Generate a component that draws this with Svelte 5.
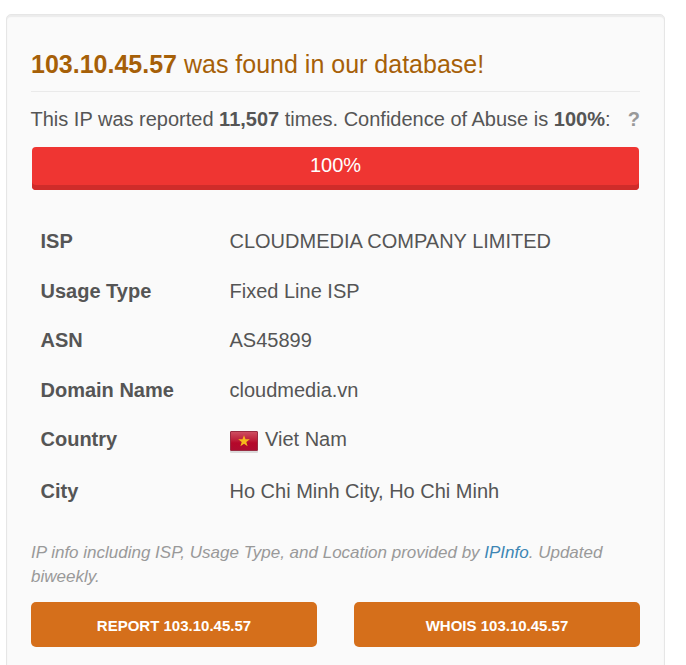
<script>
  const details = [
    { label: 'ISP', value: 'CLOUDMEDIA COMPANY LIMITED', height: 50 },
    { label: 'Usage Type', value: 'Fixed Line ISP', height: 49 },
    { label: 'ASN', value: 'AS45899', height: 50 },
    { label: 'Domain Name', value: 'cloudmedia.vn', height: 49 },
    { label: 'Country', value: 'Viet Nam', flag: true, height: 52 },
    { label: 'City', value: 'Ho Chi Minh City, Ho Chi Minh', height: 50 }
  ];
</script>

<main>
  <h3><b>103.10.45.57</b> was found in our database!</h3>
  <p class="report">
    <span>This IP was reported <b>11,507</b> times. Confidence of Abuse is <b>100%</b>:</span>
    <b class="help">?</b>
  </p>
  <div class="progress"><span>100%</span></div>
  <dl>
    {#each details as row}
      <div class="row" style="height: {row.height}px">
        <dt>{row.label}</dt>
        <dd>
          {#if row.flag}
            <svg width="28" height="22" viewBox="0 0 28 22">
              <defs>
                <linearGradient id="g" x1="0" y1="0" x2="0" y2="1">
                  <stop offset="0" stop-color="#cf5062" /><stop offset=".45" stop-color="#bd1f3a" /><stop offset=".6" stop-color="#b5082a" /><stop offset="1" stop-color="#ae0c30" />
                </linearGradient>
              </defs>
              <rect y="1" width="28" height="21" rx="1" fill="#000" opacity=".12" />
              <rect x=".5" y=".5" width="27" height="19" rx=".5" fill="url(#g)" stroke="#9a2c42" />
              <path d="M14 4.200l1.500 4.100h4.300l-3.500 2.700 1.300 4.200-3.600-2.500-3.600 2.500 1.300-4.200-3.500-2.700h4.300z" fill="#f5b91c" />
            </svg>
          {/if}<span>{row.value}</span>
        </dd>
      </div>
    {/each}
  </dl>
  <p class="note">IP info including ISP, Usage Type, and Location provided by <a href="#ipinfo">IPInfo</a>. Updated<br />biweekly.</p>
  <div class="buttons">
    <button>REPORT 103.10.45.57</button>
    <button>WHOIS 103.10.45.57</button>
  </div>
</main>

<style>
  :global(body) { background: #fff; overflow: hidden; }
  main {
    box-sizing: border-box;
    width: 659px;
    height: 670px;
    margin: 14px 0 0 6px;
    padding: 31px 24px 0;
    background: #fafafa;
    border: 1px solid #e6e6e6;
    box-shadow: inset 0 2px 1px #ececec;
    border-radius: 5px;
    font-family: "Liberation Sans", Arial, sans-serif;
    color: #555;
  }
  h3 {
    margin: 0;
    height: 45px;
    border-bottom: 1px solid #eaeaea;
    font-size: 25px;
    line-height: 37px;
    font-weight: 400;
    color: #a66008;
    white-space: nowrap;
  }
  .report {
    display: flex;
    justify-content: space-between;
    margin: 0;
    height: 55px;
    line-height: 54px;
    font-size: 20px;
    white-space: nowrap;
  }
  .report span { margin-left: -.5px; }
  .help { color: #999; }
  .progress {
    box-sizing: border-box;
    margin: 0 1px;
    height: 43px;
    border-radius: 4px;
    background: #ef3532;
    box-shadow: inset 0 -5px #cf2c2a;
    color: #fff;
    text-align: center;
    font-size: 20px;
    line-height: 37px;
  }
  dl { margin: 26px 0 0; font-size: 20px; line-height: 50px; }
  .row { display: flex; }
  dt { width: 189px; padding-left: 9.5px; font-weight: 700; }
  dd { display: flex; align-items: center; margin: 0; height: 50px; }
  svg { margin: 5px 7px 0 .5px; }
  .note { margin: 25px 0 0; font-size: 17px; font-style: italic; line-height: 24px; color: #999; white-space: nowrap; }
  a { color: #3d86b4; text-decoration: none; }
  .buttons { display: flex; gap: 37px; margin-top: 13px; }
  button {
    flex: 1;
    height: 45px;
    padding: 2px 0 0;
    border: 0;
    border-radius: 5px;
    background: #d56f1b;
    color: #fff;
    font: 700 15px "Liberation Sans", Arial, sans-serif;
  }
</style>
